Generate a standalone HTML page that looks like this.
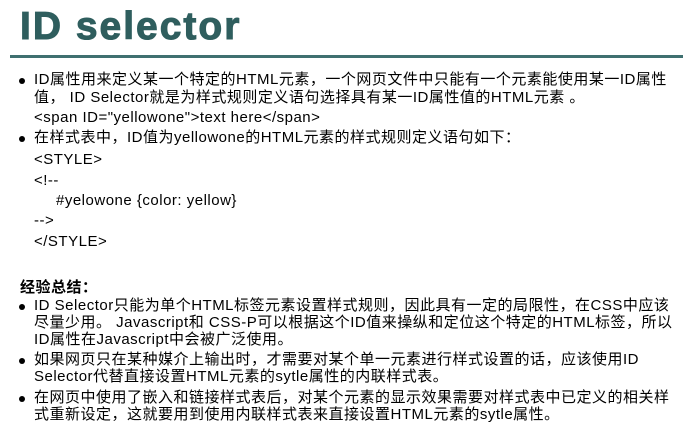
<!DOCTYPE html>
<html><head><meta charset="utf-8"><style>
body{margin:0;width:692px;height:438px;background:#fff;position:relative;overflow:hidden;font-family:"Liberation Sans","Noto Sans CJK SC",sans-serif;color:#000;}
.t{position:absolute;left:20px;top:0px;font:bold 39px "Liberation Sans",sans-serif;color:#2f5e5e;letter-spacing:2px;line-height:54px;-webkit-text-stroke:1px #2f5e5e;}
.hr{position:absolute;left:10px;top:55px;width:673px;height:3px;background:#3f7070;}
.l{position:absolute;left:34px;font-size:15px;line-height:17px;white-space:nowrap;letter-spacing:0.5px;}
.b{position:absolute;left:19px;width:6px;height:6px;border-radius:50%;background:#000;}
.h{position:absolute;left:20px;top:276px;font-size:15px;font-weight:bold;letter-spacing:0.5px;}
</style></head><body>
<div class="t">ID selector</div>
<div class="hr"></div>
<div class="b" style="top:78px"></div>
<div class="l" style="top:71px">ID属性用来定义某一个特定的HTML元素，一个网页文件中只能有一个元素能使用某一ID属性</div>
<div class="l" style="top:89px">值， ID Selector就是为样式规则定义语句选择具有某一ID属性值的HTML元素 。</div>
<div class="l" style="top:109px">&lt;span ID="yellowone"&gt;text here&lt;/span&gt;</div>
<div class="b" style="top:136px"></div>
<div class="l" style="top:129px">在样式表中，ID值为yellowone的HTML元素的样式规则定义语句如下：</div>
<div class="l" style="top:151px">&lt;STYLE&gt;</div>
<div class="l" style="top:172px">&lt;!--</div>
<div class="l" style="top:192px;left:56px">#yelowone {color: yellow}</div>
<div class="l" style="top:212px">--&gt;</div>
<div class="l" style="top:233px">&lt;/STYLE&gt;</div>
<div class="h">经验总结：</div>
<div class="b" style="top:304px"></div>
<div class="l" style="top:297px">ID Selector只能为单个HTML标签元素设置样式规则，因此具有一定的局限性，在CSS中应该</div>
<div class="l" style="top:314px">尽量少用。 Javascript和 CSS-P可以根据这个ID值来操纵和定位这个特定的HTML标签，所以</div>
<div class="l" style="top:331px">ID属性在Javascript中会被广泛使用。</div>
<div class="b" style="top:358px"></div>
<div class="l" style="top:351px">如果网页只在某种媒介上输出时，才需要对某个单一元素进行样式设置的话，应该使用ID</div>
<div class="l" style="top:368px">Selector代替直接设置HTML元素的sytle属性的内联样式表。</div>
<div class="b" style="top:396px"></div>
<div class="l" style="top:389px">在网页中使用了嵌入和链接样式表后，对某个元素的显示效果需要对样式表中已定义的相关样</div>
<div class="l" style="top:406px">式重新设定，这就要用到使用内联样式表来直接设置HTML元素的sytle属性。</div>
</body></html>
